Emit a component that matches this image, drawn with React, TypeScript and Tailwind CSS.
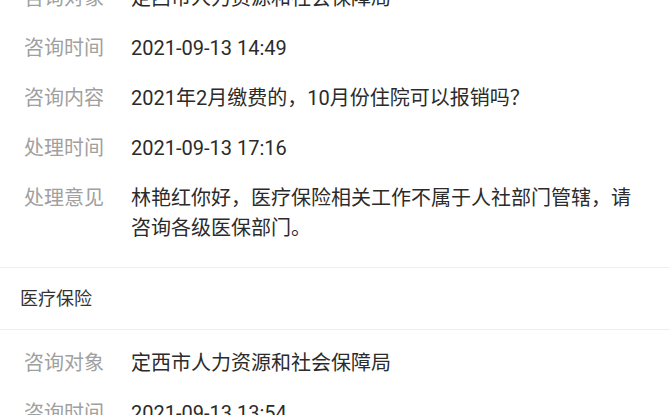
import React from 'react';

type Row = { label: string; value: string };

const first: Row[] = [
  { label: '咨询对象', value: '定西市人力资源和社会保障局' },
  { label: '咨询时间', value: '2021-09-13 14:49' },
  { label: '咨询内容', value: '2021年2月缴费的，10月份住院可以报销吗？' },
  { label: '处理时间', value: '2021-09-13 17:16' },
  { label: '处理意见', value: '林艳红你好，医疗保险相关工作不属于人社部门管辖，请咨询各级医保部门。' },
];

const second: Row[] = [
  { label: '咨询对象', value: '定西市人力资源和社会保障局' },
  { label: '咨询时间', value: '2021-09-13 13:54' },
  { label: '咨询内容', value: '城乡居民医疗保险怎么报销？' },
];

const font = { fontFamily: 'Roboto, "Noto Sans CJK SC", sans-serif' };

const RowList: React.FC<{ rows: Row[] }> = ({ rows }) => (
  <div className="pt-2 pb-[14px]">
    {rows.map((r, i) => (
      <div key={i} className="flex py-[10px] pr-[24px] text-[20px] leading-[30px]">
        <div className="w-[131px] shrink-0 pl-[24px] text-[#a0a0a0]">{r.label}</div>
        <div className="flex-1 text-[#2b2b2b]">{r.value}</div>
      </div>
    ))}
  </div>
);

const App: React.FC = () => {
  return (
    <div className="h-[415px] w-[670px] overflow-hidden bg-white" style={font}>
      <div className="-mt-[35px]">
        <RowList rows={first} />
        <div className="border-t border-[#efefef]" />
        <div className="flex h-[61px] items-center pl-[20px] text-[18px] text-[#333333]">医疗保险</div>
        <div className="border-t border-[#efefef]" />
        <RowList rows={second} />
      </div>
    </div>
  );
};

export default App;
